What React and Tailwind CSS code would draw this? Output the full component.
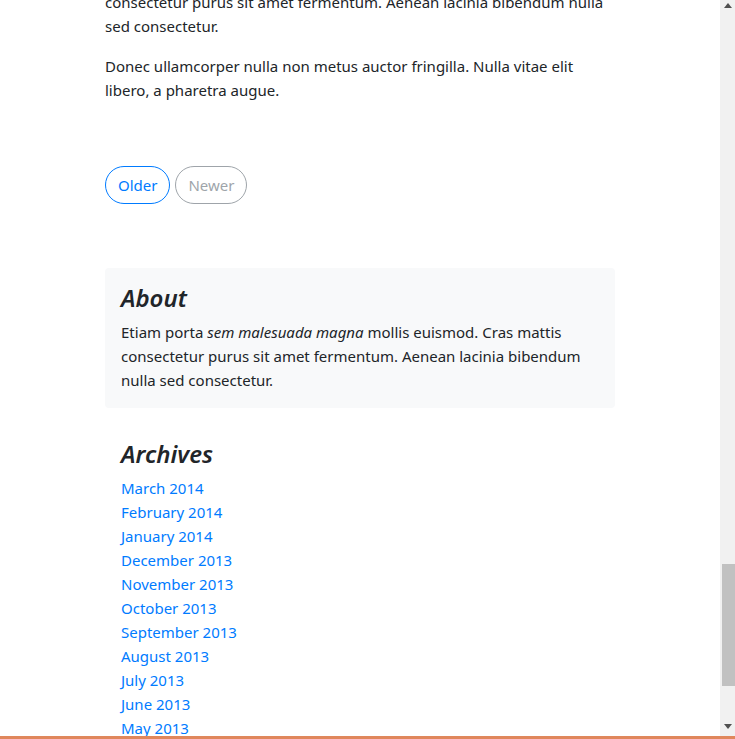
import React from "react";

const archives = [
  "March 2014",
  "February 2014",
  "January 2014",
  "December 2013",
  "November 2013",
  "October 2013",
  "September 2013",
  "August 2013",
  "July 2013",
  "June 2013",
  "May 2013",
  "April 2013",
];

const Scrollbar = () => (
  <div className="flex h-full w-[15px] shrink-0 flex-col bg-[#f1f1f1]">
    <div className="flex h-[12px] items-start justify-center pt-[3px]">
      <svg width="8" height="5" viewBox="0 0 8 5">
        <path d="M0 5 L4 0 L8 5 Z" fill="#505050" />
      </svg>
    </div>
    <div className="ml-[2px] mt-[552px] h-[122px] w-[13px] bg-[#c1c1c1]" />
    <div className="mt-auto flex h-[12px] items-start justify-center">
      <svg width="8" height="5" viewBox="0 0 8 5">
        <path d="M0 0 L8 0 L4 5 Z" fill="#505050" />
      </svg>
    </div>
  </div>
);

export default function App() {
  return (
    <div
      className="flex h-[739px] w-full flex-col overflow-hidden bg-white text-[#212529]"
      style={{ fontFamily: '"Noto Sans", "Open Sans", sans-serif' }}
    >
      <div className="flex h-[736px] w-full">
        <div className="flex-1 overflow-hidden">
          <div className="mx-auto w-[540px] px-[15px] text-[15px] leading-[24px]">
            <main className="-mt-[10px]">
              <p className="mb-4 whitespace-nowrap">
                consectetur purus sit amet fermentum. Aenean lacinia bibendum nulla
                <br />
                sed consectetur.
              </p>
              <p className="whitespace-nowrap">
                Donec ullamcorper nulla non metus auctor fringilla. Nulla vitae elit
                <br />
                libero, a pharetra augue.
              </p>

              <nav className="mb-16 mt-16 flex gap-[5px]">
                <a
                  href="#"
                  className="rounded-full border border-[#007bff] px-3 py-[6px] text-[#007bff]"
                >
                  Older
                </a>
                <span className="rounded-full border border-[#6c757d] px-3 py-[6px] text-[#6c757d] opacity-65">
                  Newer
                </span>
              </nav>
            </main>

            <aside>
              <div className="mb-4 rounded bg-[#f8f9fa] p-4">
                <h4 className="mb-2 text-[24px] font-semibold italic leading-[28px]">
                  About
                </h4>
                <p className="whitespace-nowrap">
                  Etiam porta <em>sem malesuada magna</em> mollis euismod. Cras mattis
                  <br />
                  consectetur purus sit amet fermentum. Aenean lacinia bibendum
                  <br />
                  nulla sed consectetur.
                </p>
              </div>

              <div className="p-4">
                <h4 className="mb-2 text-[24px] font-semibold italic leading-[28px]">
                  Archives
                </h4>
                <ol>
                  {archives.map((a) => (
                    <li key={a}>
                      <a href="#" className="text-[#007bff]">
                        {a}
                      </a>
                    </li>
                  ))}
                </ol>
              </div>
            </aside>
          </div>
        </div>
        <Scrollbar />
      </div>
      <div className="h-[3px] w-full bg-[#e0875c]" />
    </div>
  );
}
